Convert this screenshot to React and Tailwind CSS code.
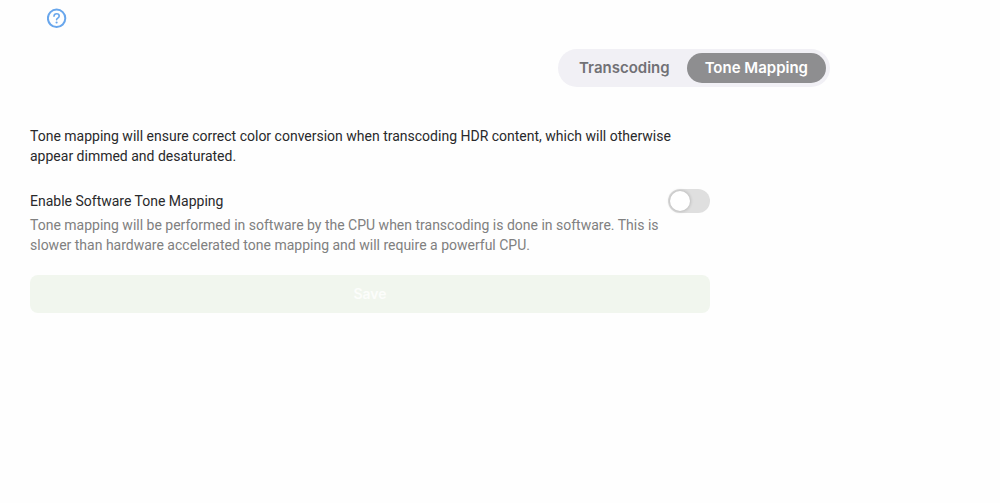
import { useState } from "react";

function HelpIcon() {
  return (
    <svg viewBox="0 0 20 20" className="size-5" fill="none" stroke="currentColor" strokeLinecap="round" strokeLinejoin="round" aria-hidden="true">
      <circle cx="9.6" cy="10.3" r="8.7" strokeWidth="2" />
      <path d="M7 8.2c.1-1.5 1.1-2.4 2.6-2.4s2.6.9 2.6 2.2c0 1-.6 1.6-1.4 2.1-.8.5-1.2.9-1.2 1.7" strokeWidth="1.6" />
      <circle cx="9.6" cy="14.5" r="1.1" fill="currentColor" stroke="none" />
    </svg>
  );
}

function Tab({ label, active, onClick }) {
  return (
    <button
      type="button"
      role="tab"
      aria-selected={active}
      onClick={onClick}
      className={
        active
          ? "rounded-full bg-[#8e8e90] px-[18px] py-[3px] font-['Inter','Liberation_Sans',sans-serif] text-[15px] leading-6 font-semibold text-white"
          : "rounded-full px-[17px] py-[3px] font-['Inter','Liberation_Sans',sans-serif] text-[15px] leading-6 font-semibold text-[#717175]"
      }
    >
      {label}
    </button>
  );
}

export default function App() {
  const [tab, setTab] = useState("Tone Mapping");
  const [enabled, setEnabled] = useState(false);

  return (
    <div className="min-h-screen bg-[#fefefe] font-['Roboto','Liberation_Sans',sans-serif] text-sm leading-5 text-[#29292b]">
      <header className="px-[47px] pt-2">
        <button type="button" aria-label="Help" className="block text-[#68a6ec]">
          <HelpIcon />
        </button>
      </header>

      <nav className="mt-[21px] flex max-w-[830px] justify-end">
        <div role="tablist" className="flex rounded-full bg-[#f1f0f5] p-1">
          {["Transcoding", "Tone Mapping"].map((name) => (
            <Tab key={name} label={name} active={tab === name} onClick={() => setTab(name)} />
          ))}
        </div>
      </nav>

      <main className="max-w-[740px] px-[30px] pt-[39px]">
        <p>
          Tone mapping will ensure correct color conversion when transcoding HDR content, which will otherwise appear
          dimmed and desaturated.
        </p>

        <form className="mt-[23px]" onSubmit={(e) => e.preventDefault()}>
          <div className="flex items-center justify-between">
            <label htmlFor="software-tone-mapping">Enable Software Tone Mapping</label>
            <input
              id="software-tone-mapping"
              type="checkbox"
              role="switch"
              aria-describedby="software-tone-mapping-help"
              checked={enabled}
              onChange={(e) => setEnabled(e.target.checked)}
              className="flex h-6 w-[42px] appearance-none items-center rounded-full bg-[#dfdfdf] px-0.5 before:size-5 before:rounded-full before:bg-white before:shadow-[0_0_3px_1px_rgba(0,0,0,0.14)] checked:justify-end checked:bg-[#72b35d]"
            />
          </div>
          <p id="software-tone-mapping-help" className="mt-0.5 pr-4 text-[#808080]">
            Tone mapping will be performed in software by the CPU when transcoding is done in software. This is slower
            than hardware accelerated tone mapping and will require a powerful CPU.
          </p>
          <button
            type="submit"
            disabled={!enabled}
            className="mt-5 w-full rounded-lg bg-[#5aa02c] py-[9px] font-['Inter','Liberation_Sans',sans-serif] font-semibold text-white disabled:bg-[#f1f6ee] disabled:text-[#fcfdfb]"
          >
            Save
          </button>
        </form>
      </main>
    </div>
  );
}
